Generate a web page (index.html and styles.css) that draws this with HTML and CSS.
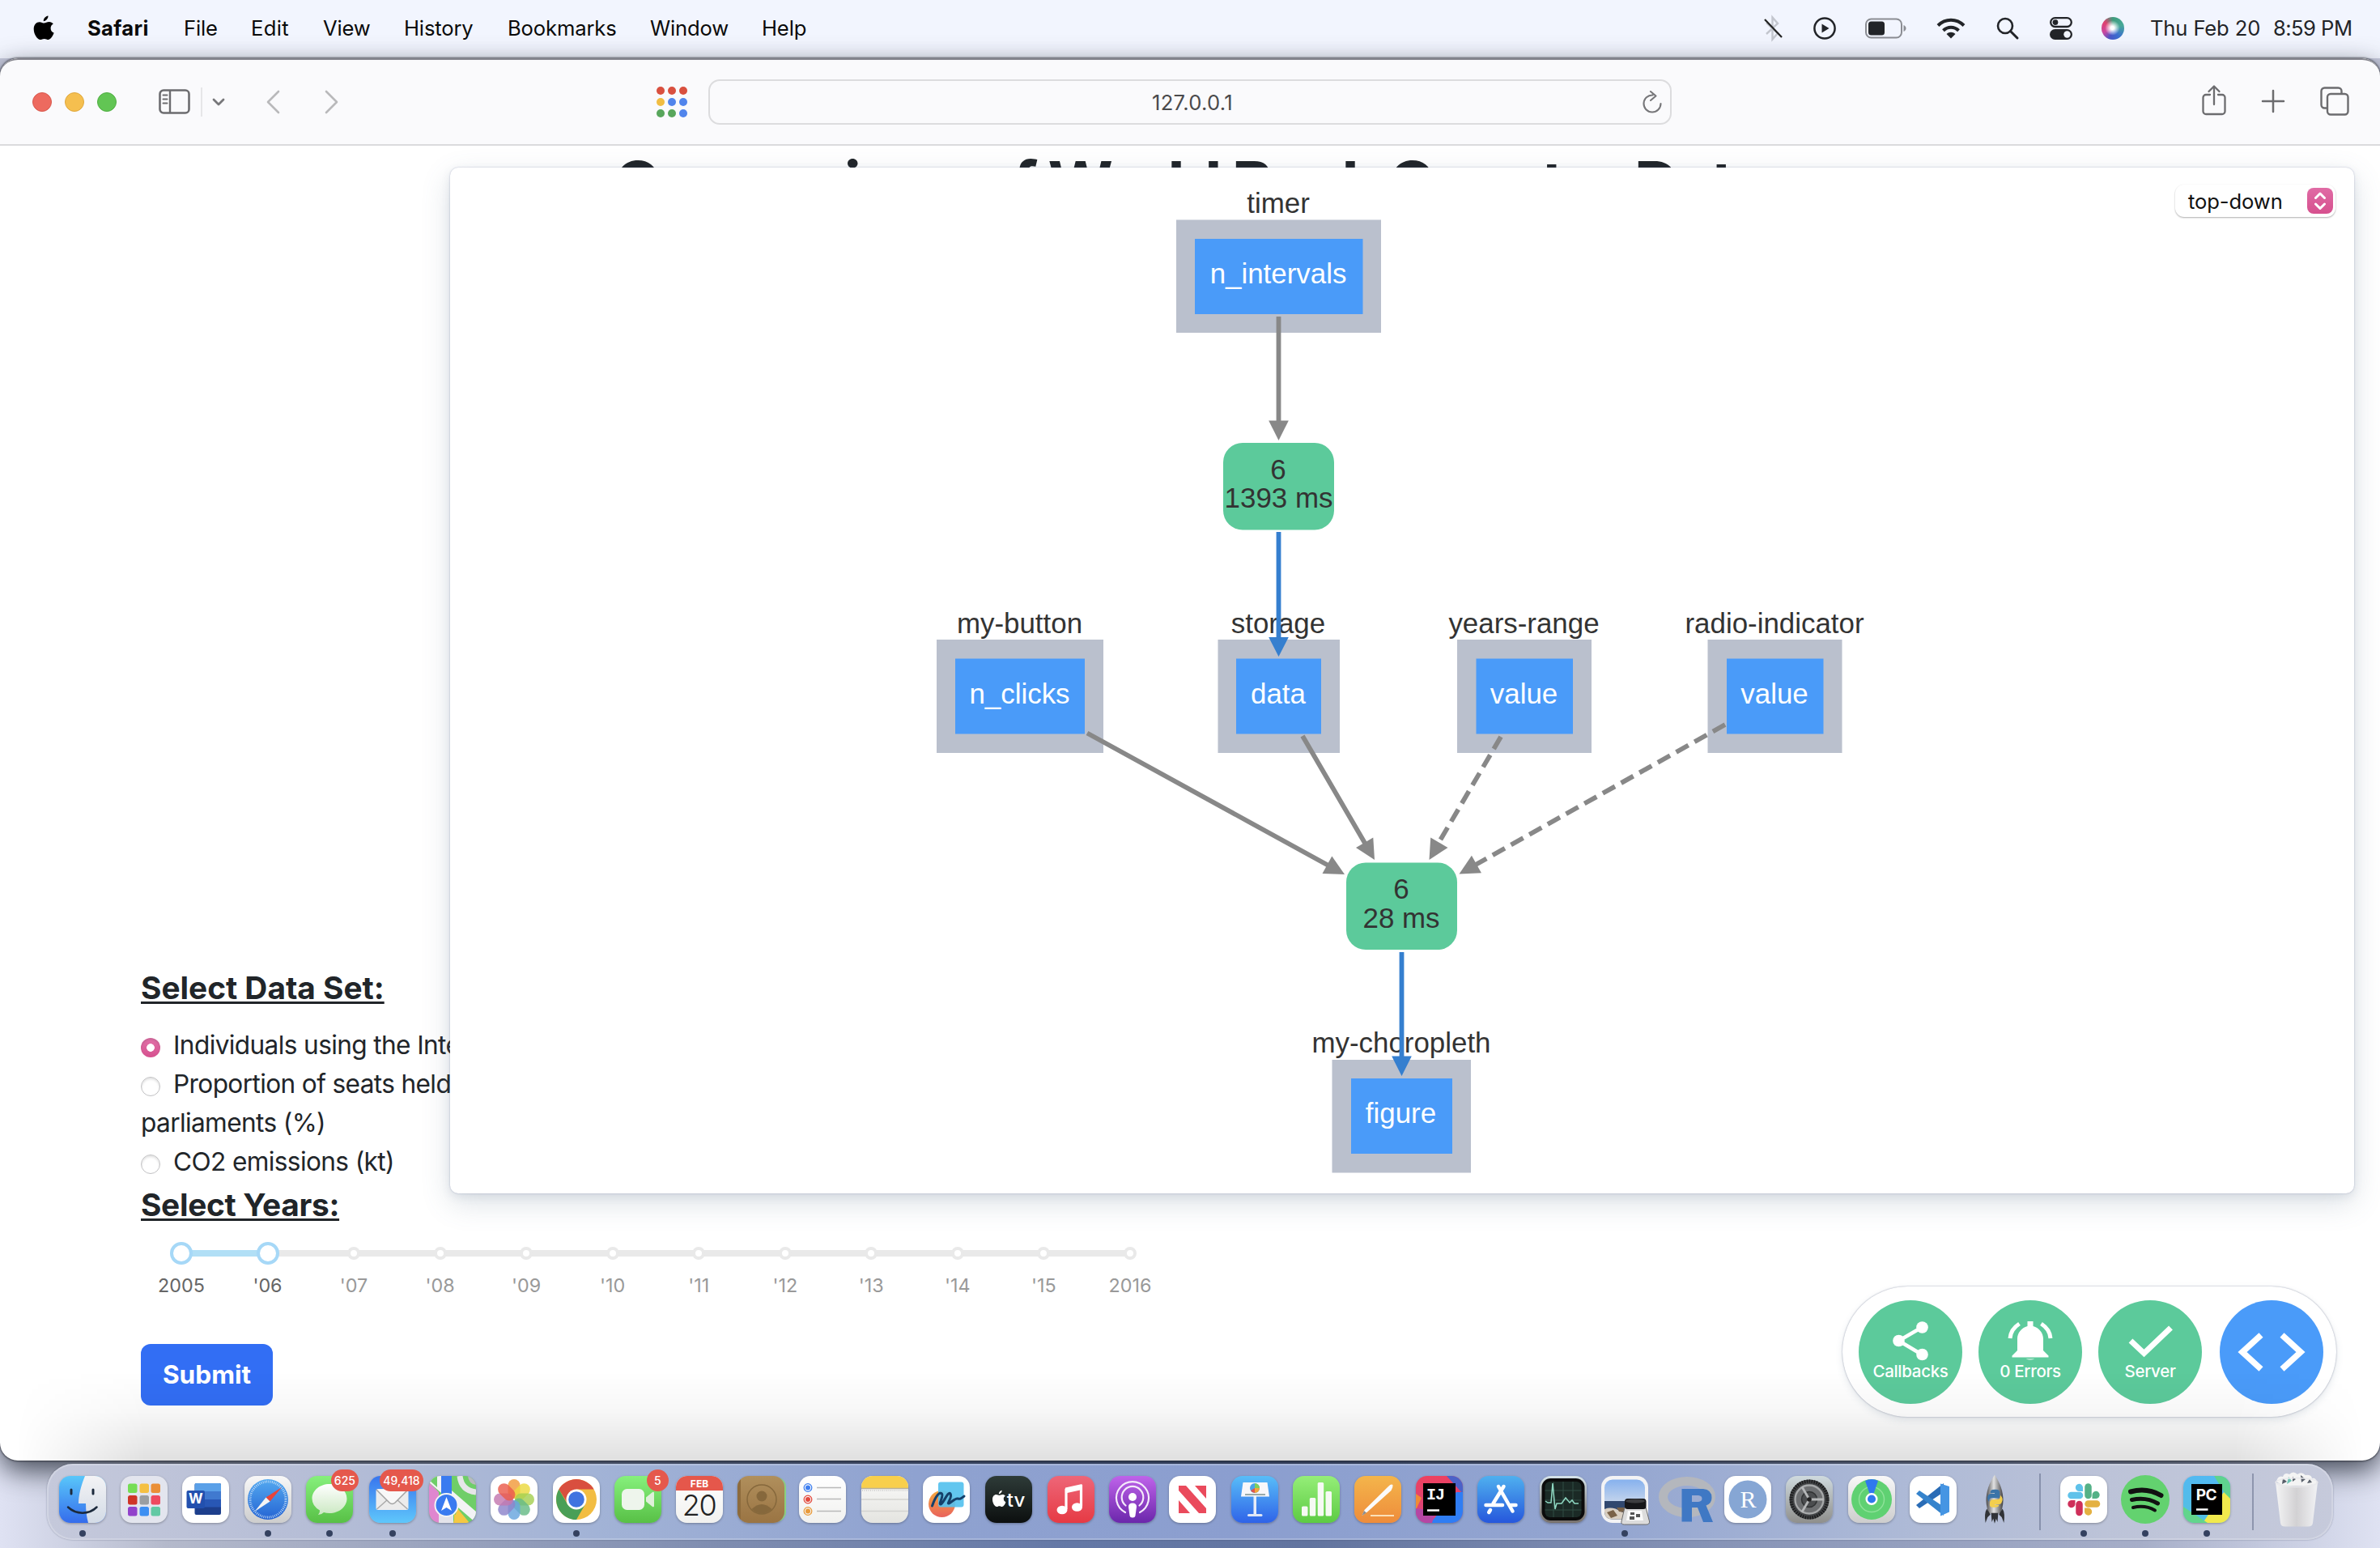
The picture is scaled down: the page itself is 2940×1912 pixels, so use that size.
FILE: index.html
```html
<!DOCTYPE html>
<html lang="en">
<head>
<meta charset="utf-8">
<title>127.0.0.1</title>
<link rel="stylesheet" href="styles.css">
</head>
<body>
<header class="menubar">
  <svg class="apple" viewBox="0 0 26 31"><path d="M18.500 .5C18.700 4 15.800 7 12.800 7.200C12.400 4 15.500 .9 18.500 .5ZM24.800 10.600C22.600 12 21.600 13.700 21.600 15.900C21.600 18.700 23.200 20.700 25.600 21.600C24.500 25.300 21.600 30 18.600 30C17 30 15.900 28.900 13.700 28.900C11.500 28.900 10.400 30 8.800 30C5 30 .7 23.500 .7 16.800C.7 11.500 4 8.200 7.800 8.200C10.200 8.200 11.900 9.600 13.500 9.600C15 9.600 17 8.100 19.700 8.100C21.700 8.100 23.700 9 24.800 10.600Z"/></svg>
  <nav class="menus">
    <span class="menu-app">Safari</span>
    <span class="menu-file">File</span>
    <span class="menu-edit">Edit</span>
    <span class="menu-view">View</span>
    <span class="menu-history">History</span>
    <span class="menu-bookmarks">Bookmarks</span>
    <span class="menu-window">Window</span>
    <span class="menu-help">Help</span>
  </nav>
  <div class="status">
    <svg class="st-bt" viewBox="0 0 24 30"><path d="M3 22 17 9 10.500 1.500V28.500L17 21 3 8" fill="none" stroke="#c3c6ce" stroke-width="2.400"/><path d="M1 4 22 26" stroke="#222" stroke-width="2.200"/></svg>
    <svg class="st-play" viewBox="0 0 28 28"><circle cx="14" cy="14" r="12.600" fill="none" stroke="#222428" stroke-width="2.500"/><path d="M10.500 8.500v11l9-5.500z" fill="#222428"/></svg>
    <svg class="st-batt" viewBox="0 0 52 26"><rect x="1" y="1.500" width="44" height="23" rx="6.500" fill="none" stroke="#8b8d93" stroke-width="2"/><rect x="4" y="4.500" width="20" height="17" rx="3.500" fill="#222428"/><path d="M47.500 9v8c4-1.500 4-6.500 0-8z" fill="#8b8d93"/></svg>
    <svg class="st-wifi" viewBox="0 0 36 26"><g fill="none" stroke="#222428" stroke-width="4"><path d="M2 9.500C11 .5 25 .5 34 9.500"/><path d="M8.500 15.800C14 10.500 22 10.500 27.500 15.800"/></g><path d="M12.500 20C16 17 20 17 23.500 20L18 25.500z" fill="#222428"/></svg>
    <svg class="st-search" viewBox="0 0 28 28"><circle cx="11" cy="11" r="9" fill="none" stroke="#222428" stroke-width="2.600"/><path d="M17.500 17.500 26 26" stroke="#222428" stroke-width="3" stroke-linecap="round"/></svg>
    <svg class="st-cc" viewBox="0 0 28 28"><rect x="1.200" y="1.200" width="25.600" height="10.800" rx="5.400" fill="none" stroke="#222428" stroke-width="2.300"/><circle cx="7" cy="6.600" r="3.400" fill="#222428"/><rect x="0" y="15" width="28" height="13" rx="6.500" fill="#222428"/><circle cx="21.500" cy="21.500" r="4.200" fill="#f2f5fe"/></svg>
    <span class="siri"></span>
    <span class="clock-date">Thu Feb 20</span><span class="clock-time">8:59 PM</span>
  </div>
</header>

<main class="window">
  <div class="toolbar">
    <div class="lights"><i class="close"></i><i class="min"></i><i class="max"></i></div>
    <svg class="tb-sidebar" viewBox="0 0 40 32"><rect x="1.500" y="1.500" width="36" height="28" rx="4.500" fill="none" stroke="#6c6c6f" stroke-width="2.600"/><path d="M14 2v27" stroke="#6c6c6f" stroke-width="2.400"/><path d="M5.500 7.500h5M5.500 12.500h5M5.500 17.500h5" stroke="#6c6c6f" stroke-width="2" stroke-linecap="round"/></svg>
    <i class="tb-rule"></i>
    <svg class="tb-chev" viewBox="0 0 16 10"><path d="M2 2l6 6 6-6" fill="none" stroke="#77777a" stroke-width="2.800" stroke-linecap="round" stroke-linejoin="round"/></svg>
    <svg class="tb-back" viewBox="0 0 18 30"><path d="M16 2 3 15l13 13" fill="none" stroke="#b9b9bb" stroke-width="2.600" stroke-linecap="round" stroke-linejoin="round"/></svg>
    <svg class="tb-fwd" viewBox="0 0 18 30"><path d="M3 2l13 13L3 28" fill="none" stroke="#b9b9bb" stroke-width="2.600" stroke-linecap="round" stroke-linejoin="round"/></svg>
    <div class="dots"><i class="r"></i><i class="r"></i><i class="r"></i><i class="y"></i><i class="b"></i><i class="b"></i><i class="g"></i><i class="g"></i><i class="b"></i></div>
    <div class="url"><span class="url-text">127.0.0.1</span>
      <svg class="reload" viewBox="0 0 26 28"><path d="M13.500 5.500A10.500 10.500 0 1 0 23.500 16M11 1l6.500 5.500L11 12" fill="none" stroke="#77777a" stroke-width="2.100" stroke-linecap="round" stroke-linejoin="round"/></svg></div>
    <svg class="tb-share" viewBox="0 0 30 38"><path d="M10 12H5a3.500 3.500 0 0 0-3.500 3.500v17A3.500 3.500 0 0 0 5 36h20a3.500 3.500 0 0 0 3.500-3.500v-17A3.500 3.500 0 0 0 25 12h-5M15 24V2M8.500 8 15 1.500 21.500 8" fill="none" stroke="#6c6c6f" stroke-width="2.300" stroke-linecap="round" stroke-linejoin="round"/></svg>
    <svg class="tb-plus" viewBox="0 0 28 28"><path d="M14 1v26M1 14h26" stroke="#6c6c6f" stroke-width="2.500" stroke-linecap="round"/></svg>
    <svg class="tb-tabs" viewBox="0 0 36 36"><path d="M8 26.500H5.500a4 4 0 0 1-4-4v-17a4 4 0 0 1 4-4h17a4 4 0 0 1 4 4V8" fill="none" stroke="#6c6c6f" stroke-width="2.400"/><rect x="9" y="9" width="25.500" height="25.500" rx="4" fill="none" stroke="#6c6c6f" stroke-width="2.400"/></svg>
  </div>

  <div class="page">
    <h1>Comparison of World Bank Country Data</h1>
    <div class="choropleth"></div>
    <section class="controls">
      <h2>Select Data Set:</h2>
      <div class="options">
        <label><i class="radio on"></i>Individuals using the Internet (% of population)</label>
        <label><i class="radio"></i>Proportion of seats held by women in national<br>parliaments (%)</label>
        <label><i class="radio"></i>CO2 emissions (kt)</label>
      </div>
      <h2 class="years">Select Years:</h2>
      <div class="slider">
        <div class="rail"><div class="range"></div></div>
        <div class="stops">
          <div class="stop on"><i></i><span>2005</span></div>
          <div class="stop on"><i></i><span>'06</span></div>
          <div class="stop"><i></i><span>'07</span></div>
          <div class="stop"><i></i><span>'08</span></div>
          <div class="stop"><i></i><span>'09</span></div>
          <div class="stop"><i></i><span>'10</span></div>
          <div class="stop"><i></i><span>'11</span></div>
          <div class="stop"><i></i><span>'12</span></div>
          <div class="stop"><i></i><span>'13</span></div>
          <div class="stop"><i></i><span>'14</span></div>
          <div class="stop"><i></i><span>'15</span></div>
          <div class="stop"><i></i><span>2016</span></div>
        </div>
      </div>
      <button class="submit">Submit</button>
    </section>

    <div class="graph-panel">
      <svg class="graph" viewBox="556 207 2352 1267">
        <g fill="#bac0cd">
          <rect x="1453" y="271.500" width="253" height="139.500"/><rect x="1157" y="790" width="206" height="140"/><rect x="1504.500" y="790" width="150.500" height="140"/><rect x="1800" y="790" width="166" height="140"/><rect x="2109.500" y="790" width="166" height="140"/><rect x="1645.500" y="1309" width="171.500" height="139.500"/>
        </g>
        <g fill="#4a9bf9">
          <rect x="1476" y="295" width="207.500" height="93"/><rect x="1180" y="813.500" width="160" height="93"/><rect x="1527" y="813.500" width="105" height="93"/><rect x="1823.500" y="813.500" width="119.500" height="93"/><rect x="2133" y="813.500" width="119.500" height="93"/><rect x="1669" y="1332" width="125" height="93"/>
        </g>
        <g fill="#5cca9b"><rect x="1511" y="547" width="137" height="107.500" rx="24"/><rect x="1663" y="1065.500" width="137" height="107.500" rx="24"/></g>
        <g class="g-label">
          <text x="1579" y="262.500">timer</text><text x="1259.500" y="781.500">my-button</text><text x="1579" y="781.500">storage</text><text x="1882.500" y="781.500">years-range</text><text x="2192" y="781.500">radio-indicator</text><text x="1731" y="1300">my-choropleth</text>
          <text x="1579" y="591.500">6</text><text x="1579.500" y="627">1393 ms</text><text x="1731" y="1110">6</text><text x="1731" y="1145.500">28 ms</text>
        </g>
        <g class="g-label g-prop">
          <text x="1579" y="350">n_intervals</text><text x="1259.500" y="868.500">n_clicks</text><text x="1579" y="868.500">data</text><text x="1882.500" y="868.500">value</text><text x="2192" y="868.500">value</text><text x="1730.500" y="1387">figure</text>
        </g>
        <g stroke="#888" stroke-width="5.800" fill="none">
          <path d="M1579.500 391V522M1343 905.500 1641 1069M1609 909 1687 1043"/>
          <path d="M1854 910 1776 1043M2131 895 1822 1068.500" stroke-dasharray="17.300 8.700"/>
        </g>
        <g fill="#888">
          <path d="M1579.500 544l-12.300-24.600h24.600z"/>
          <path d="M0 0l-12.300-24.600h24.600z" transform="translate(1661 1080) rotate(-61.300)"/>
          <path d="M0 0l-12.300-24.600h24.600z" transform="translate(1698 1062) rotate(-30.200)"/>
          <path d="M0 0l-12.300-24.600h24.600z" transform="translate(1765.500 1062) rotate(30.200)"/>
          <path d="M0 0l-12.300-24.600h24.600z" transform="translate(1802.500 1079.500) rotate(60.700)"/>
        </g>
        <g fill="#357fcf"><path d="M1576.600 657h5.800V787h9.400l-12.300 24-12.300-24h9.400zM1728.600 1176h5.800v128.500h9.400L1731.500 1329l-12.300-24.500h9.400z"/></g>
      </svg>
      <div class="select"><span>top-down</span><svg viewBox="0 0 32 32"><path d="M10.500 12.500 16 7l5.500 5.500M10.500 20l5.500 5.500 5.500-5.500" fill="none" stroke="#fff" stroke-width="3" stroke-linecap="round" stroke-linejoin="round"/></svg></div>
    </div>

    <div class="debug">
      <div class="dbg"><svg viewBox="0 0 58 48"><path d="M43 7.500 14.500 24 43 41" fill="none" stroke="#fff" stroke-width="4.500"/><circle cx="43.500" cy="7.500" r="7.300"/><circle cx="14.500" cy="24" r="7.300"/><circle cx="43.500" cy="41" r="7.300"/></svg><span>Callbacks</span></div>
      <div class="dbg"><svg viewBox="0 0 58 48"><path d="M25.500 0h7v6C40 8 45 14.500 45 21.500V36l6.500 6.500v2h-45v-2L13 36V21.500C13 14.500 18 8 25.500 6z"/><path d="M23.500 46.500h11q-5.500 2-11 0z"/><path d="M15.500 3C8.500 7.500 4.500 13.500 4 21M42.500 3C49.500 7.500 53.500 13.500 54 21" fill="none" stroke="#fff" stroke-width="5"/></svg><span>0 Errors</span></div>
      <div class="dbg"><svg viewBox="0 0 58 48"><path d="M5 24 21.500 39.500 54.500 8" fill="none" stroke="#fff" stroke-width="7"/></svg><span>Server</span></div>
      <div class="dbg dbg-code"><svg viewBox="0 0 84 48"><path d="M29 3 6 24l23 21M55 3l23 21-23 21" fill="none" stroke="#fff" stroke-width="7.500"/></svg></div>
    </div>
  </div>
</main>

<footer class="dock">
  <div class="app run"><svg viewBox="0 0 58 58" class="tile t-finder"><path d="M32 0C27 12 24 24 24 34H33C33 43 34 51 36 58H58V0Z" fill="url(#gFace)"/><path d="M15 17v5M42 17v5" stroke="#1c2a3c" stroke-width="3" stroke-linecap="round"/><path d="M11 38.500C21 48 37 48 46.500 38.500" fill="none" stroke="#1c2a3c" stroke-width="2.500" stroke-linecap="round"/><defs><linearGradient id="gFace" x2="0" y2="1"><stop stop-color="#f3f3f5"/><stop offset="1" stop-color="#d3dbe6"/></linearGradient></defs></svg></div>
  <div class="app"><svg viewBox="0 0 58 58" class="tile t-launch"><rect x="9" y="9.500" width="11.500" height="11.500" rx="2.500" fill="#75dd55"/><rect x="23.500" y="9.500" width="11.500" height="11.500" rx="2.500" fill="#f5c043"/><rect x="37.500" y="9.500" width="11.500" height="11.500" rx="2.500" fill="#ea8f37"/><rect x="9" y="24" width="11.500" height="11.500" rx="2.500" fill="#cf3427"/><rect x="23.500" y="24" width="11.500" height="11.500" rx="2.500" fill="#9a9ea1"/><rect x="37.500" y="24" width="11.500" height="11.500" rx="2.500" fill="#ee4a5f"/><rect x="9" y="38" width="11.500" height="11.500" rx="2.500" fill="#9242cb"/><rect x="23.500" y="38" width="11.500" height="11.500" rx="2.500" fill="#3d8ff2"/><rect x="37.500" y="38" width="11.500" height="11.500" rx="2.500" fill="#62c9a4"/></svg></div>
  <div class="app"><svg viewBox="0 0 58 58" class="tile t-white"><rect x="15.500" y="9" width="32.500" height="39" rx="2" fill="#1d3f8c"/><path d="M15.500 29h32.500v9.500H15.500z" fill="#2857b5"/><path d="M15.500 19h32.500v10H15.500z" fill="#4079cf"/><path d="M15.500 19v-8q0-2 2-2h28.500q2 0 2 2v8z" fill="#5aa0e8"/><rect x="5.500" y="18" width="22.500" height="22" rx="2" fill="#2250ae"/><text x="16.700" y="34" class="t-w">W</text></svg></div>
  <div class="app run"><svg viewBox="0 0 58 58" class="tile t-safari"><circle cx="29" cy="29" r="25" fill="url(#gSaf)"/><circle cx="29" cy="29" r="22" fill="none" stroke="#cfe4f8" stroke-width="3" stroke-dasharray=".8 1.500"/><path d="M46 14 26.500 26.500 31.500 31.500z" fill="#e8443a"/><path d="M12.500 44 26.500 26.500 31.500 31.500z" fill="#f4f4f4"/><defs><linearGradient id="gSaf" x2="0" y2="1"><stop stop-color="#53a9f0"/><stop offset="1" stop-color="#2564d3"/></linearGradient></defs></svg></div>
  <div class="app run"><svg viewBox="0 0 58 58" class="tile t-green"><path d="M29 10C41 10 50.500 18 50.500 28S41 46 29 46q-4 0-7-1-3 3-7 3 2.500-3 2-5.500Q7.500 37 7.500 28C7.500 18 17 10 29 10z" fill="url(#gMsg)"/><defs><linearGradient id="gMsg" x2="0" y2="1"><stop stop-color="#fff"/><stop offset="1" stop-color="#cbe8c2"/></linearGradient></defs></svg><b class="badge">625</b></div>
  <div class="app run shift"><svg viewBox="0 0 58 58" class="tile t-mail"><rect x="8.500" y="16" width="40" height="26" rx="2.500" fill="#ececec"/><path d="M9.500 41 23 29M47.500 41 34 29" stroke="#aaa" stroke-width="1.500"/><path d="M9 17 25 33q3.500 3 7 0L48 17" fill="#f8f8f8" stroke="#a2a2a2" stroke-width="1.500"/></svg><b class="badge badge-mail">49,418</b></div>
  <div class="app"><svg viewBox="0 0 58 58" class="tile t-maps"><path d="M0 8V58H12V20z" fill="#df86cf"/><path d="M35 40 50 58H30z" fill="#f5c843"/><path d="M0 8 58 58V44L28 18V0H0z" fill="#f3f3f5"/><path d="M0 0h10v14L0 5z" fill="#6fce68"/><path d="M12 38h18v20H12z" fill="#e3e3ea"/><path d="M31 47 50 58H31z" fill="#f5c843"/><path d="M15 0h13v30H15z" fill="#3a7bf0"/><path d="M38 0q2 18 20 20" fill="none" stroke="#e6e6e8" stroke-width="7"/><path d="M48 0q1 10 10 11V0z" fill="#b9babd"/><circle cx="21.500" cy="36" r="14" fill="#3a7bf0" stroke="#f4f4f4" stroke-width="2"/><path d="M21.500 26 28 43l-6.500-4-6.500 4z" fill="#fff"/></svg></div>
  <div class="app"><svg viewBox="0 0 58 58" class="tile t-white"><g fill-opacity=".82" transform="translate(29 29)"><rect x="-7.500" y="-25" width="15" height="24" rx="7.500" fill="#f29a3a"/><rect x="-7.500" y="-25" width="15" height="24" rx="7.500" fill="#ecd940" transform="rotate(45)"/><rect x="-7.500" y="-25" width="15" height="24" rx="7.500" fill="#a5cf52" transform="rotate(90)"/><rect x="-7.500" y="-25" width="15" height="24" rx="7.500" fill="#66bb86" transform="rotate(135)"/><rect x="-7.500" y="-25" width="15" height="24" rx="7.500" fill="#68a5de" transform="rotate(180)"/><rect x="-7.500" y="-25" width="15" height="24" rx="7.500" fill="#8c84cb" transform="rotate(225)"/><rect x="-7.500" y="-25" width="15" height="24" rx="7.500" fill="#c377b0" transform="rotate(270)"/><rect x="-7.500" y="-25" width="15" height="24" rx="7.500" fill="#ea5b4c" transform="rotate(315)"/></g></svg></div>
  <div class="app run"><svg viewBox="0 0 58 58" class="tile t-white"><circle cx="29" cy="29" r="25" fill="#f2bd42"/><path d="M7.400 16.500A25 25 0 0 1 50.600 16.500H29L19 35z" fill="#d94f3f"/><path d="M7.400 16.500A25 25 0 0 0 29 54L39.800 35.200 29 41 18.200 35.200z" fill="#4a9f57"/><circle cx="29" cy="29" r="12.500" fill="#fff"/><circle cx="29" cy="29" r="9.800" fill="#4073e0"/></svg></div>
  <div class="app"><svg viewBox="0 0 58 58" class="tile t-green"><rect x="9" y="16" width="28" height="26" rx="6.500" fill="#eef5ec"/><path d="M39 26.500 47 20q2-1 2 1v16q0 2-2 1l-8-6.500z" fill="#dff0da"/></svg><b class="badge badge-one">5</b></div>
  <div class="app"><svg viewBox="0 0 58 58" class="tile t-cal"><path d="M0 0h58v18H0z" fill="#e5574b"/><text x="29" y="14" class="t-feb">FEB</text><text x="28.500" y="49" class="t-20">20</text></svg></div>
  <div class="app"><svg viewBox="0 0 58 58" class="tile t-contacts"><path d="M0 0h4v58H0z" fill="#8d6b3c"/><circle cx="30" cy="29" r="18" fill="none" stroke="#86683c" stroke-width="1.500"/><circle cx="30" cy="25" r="6.500" fill="#86683c"/><path d="M17.500 41q12.500-12 25 0-12.500 11-25 0z" fill="#86683c"/></svg></div>
  <div class="app"><svg viewBox="0 0 58 58" class="tile t-cal"><g stroke-width="1.300" fill="none"><circle cx="11" cy="14.500" r="4.800" stroke="#3e7ff0"/><circle cx="11" cy="29" r="4.800" stroke="#e34a3e"/><circle cx="11" cy="43.500" r="4.800" stroke="#e99a3a"/><path d="M22 14.500h30M22 28.500h30M22 43.500h30" stroke="#b9b9b9" stroke-width="1.500"/></g><circle cx="11" cy="14.500" r="3" fill="#3e7ff0"/><circle cx="11" cy="29" r="3" fill="#e34a3e"/><circle cx="11" cy="43.500" r="3" fill="#e99a3a"/></svg></div>
  <div class="app"><svg viewBox="0 0 58 58" class="tile t-notes"><path d="M0 0h58v15H0z" fill="#f8cf4c"/><path d="M0 15.500h58" stroke="#b9b19a" stroke-width="1.500"/><path d="M1 18h57" stroke="#b0b0b0" stroke-dasharray="1 1.500"/><path d="M0 29h58M0 43.500h58" stroke="#d3d3d0" stroke-width="1.300"/></svg></div>
  <div class="app"><svg viewBox="0 0 58 58" class="tile t-white"><circle cx="23.500" cy="34.500" r="16.500" fill="url(#gFf)"/><rect x="19" y="7.500" width="31.500" height="31" rx="3" fill="#55c1ee" fill-opacity=".92"/><path d="M11.500 37C16 24 21 19 23.500 22S19 35 22 35 31 18 34 22 29 35 32 34 40 27 43 28 47 28 51 25" fill="none" stroke="#15406a" stroke-width="3" stroke-linecap="round"/><defs><linearGradient id="gFf" x2="0" y2="1"><stop stop-color="#f5a93e"/><stop offset="1" stop-color="#e9635c"/></linearGradient></defs></svg></div>
  <div class="app shift"><svg viewBox="0 0 58 58" class="tile t-tv"><g transform="translate(8.500 17.500) scale(.66 .68)" fill="#fff"><path d="M18.500 .5C18.700 4 15.800 7 12.800 7.200C12.400 4 15.500 .9 18.500 .5ZM24.800 10.600C22.600 12 21.600 13.700 21.600 15.900C21.600 18.700 23.200 20.700 25.600 21.600C24.500 25.300 21.600 30 18.600 30C17 30 15.900 28.900 13.700 28.900C11.500 28.900 10.400 30 8.800 30C5 30 .7 23.500 .7 16.800C.7 11.500 4 8.200 7.800 8.200C10.200 8.200 11.900 9.600 13.500 9.600C15 9.600 17 8.100 19.700 8.100C21.700 8.100 23.700 9 24.800 10.600Z"/></g><text x="38" y="38" class="t-tvtext">tv</text></svg></div>
  <div class="app shift"><svg viewBox="0 0 58 58" class="tile t-music"><path d="M23 41V17l18.500-4v24.500" fill="none" stroke="#fff" stroke-width="3.200"/><path d="M22 14.500 42.500 10v7L22 21.500z" fill="#fff"/><ellipse cx="18" cy="42" rx="6.500" ry="5.300" fill="#fff"/><ellipse cx="36.500" cy="38.500" rx="6.500" ry="5.300" fill="#fff"/></svg></div>
  <div class="app shift"><svg viewBox="0 0 58 58" class="tile t-pod"><g fill="none" stroke="#f4eafa" stroke-width="2.200" stroke-linecap="round"><path d="M20 45A20 20 0 1 1 38 45"/><path d="M20.500 36.500A13.300 13.300 0 1 1 37.500 36.500"/></g><circle cx="29" cy="26" r="5" fill="#fff"/><path d="M24 38q0-4.500 5-4.500t5 4.500l-1.500 11q-.5 2.500-3.500 2.500t-3.500-2.500z" fill="#fff"/></svg></div>
  <div class="app"><svg viewBox="0 0 58 58" class="tile t-white"><path d="M12 12h9L46 40v6h-9L12 18z" fill="#ea4a5c"/><path d="M32 12h14v16zM12 30v16h14z" fill="#ea4a5c"/></svg></div>
  <div class="app"><svg viewBox="0 0 58 58" class="tile t-key"><path d="M27.500 25h3.500v23h-3.500z" fill="#e7ecf7"/><rect x="20" y="47" width="18.500" height="3" rx="1.500" fill="#dfe6f5"/><path d="M14.500 8h30l2.500 17.500H12z" fill="#f7f7fa"/><path d="M17 22h25v2H17z" fill="#9aa"/><circle cx="29" cy="15" r="6" fill="#4aa3e8"/><path d="M29 15V9a6 6 0 0 1 6 6z" fill="#7fd05c"/><path d="M29 15h6a6 6 0 0 1-6 6z" fill="#f2a63c"/><path d="M29 15v6a6 6 0 0 1-5-3z" fill="#e2564d"/></svg></div>
  <div class="app"><svg viewBox="0 0 58 58" class="tile t-num"><g fill="#f6faf3"><rect x="11" y="37.500" width="7.500" height="12" rx="1.500"/><rect x="20.800" y="27" width="7.500" height="22.500" rx="1.500"/><rect x="30.700" y="8" width="7.500" height="41.500" rx="1.500"/><rect x="40.500" y="19" width="7.500" height="30.500" rx="1.500"/></g></svg></div>
  <div class="app"><svg viewBox="0 0 58 58" class="tile t-pages"><path d="M47.500 11q.5 3-2 7L16 44.500l-6.500 4.500 3-7L42 13q3.500-3.500 5.500-2z" fill="#fbfbfb"/><path d="M9.500 49 12 43l3 2.500z" fill="#8d8d8d"/><path d="M20 49h29" stroke="#fbe0b8" stroke-width="2"/></svg></div>
  <div class="app"><svg viewBox="0 0 58 58" class="tile t-ij"><path d="M38 0h20v22z" fill="#4b62c8"/><path d="M58 20V58H18L50 20z" fill="#2f7df4"/><path d="M0 22 7 27 0 42z" fill="#f08a35"/><path d="M0 40 24 44 20 58H0z" fill="#b546a4"/><rect x="9" y="9" width="40" height="40" fill="#000"/><text x="13" y="29" class="t-ijt">IJ</text><path d="M14 42.500h15" stroke="#fff" stroke-width="2.600"/></svg></div>
  <div class="app"><svg viewBox="0 0 58 58" class="tile t-store"><g stroke="#fff" stroke-width="4.500" stroke-linecap="round"><path d="M32.500 13 19.500 34M26 13 43.500 43.500M10.500 36H31M41.500 36h6M16 42l-1.800 3"/></g></svg></div>
  <div class="app"><svg viewBox="0 0 58 58" class="tile t-act"><rect x="2.500" y="3" width="53" height="52" rx="11" fill="#0b0b0b"/><rect x="6.500" y="7" width="45" height="44" rx="6" fill="#1b2a26"/><path d="M6.500 18h45M6.500 30h45M6.500 42h45M17 7v44M29 7v44M41 7v44" stroke="#335048" stroke-width=".9"/><path d="M7 31l3 2 4 0 2-24 3 32 2-7 6 0 5-7 5 6 3-3 3 4 5 0" fill="none" stroke="#8fd8c2" stroke-width="1.500"/></svg></div>
  <div class="app run"><svg viewBox="0 0 62 62" class="tile-free"><rect width="58" height="58" rx="14" fill="#f3f3f5"/><rect x="4" y="4.500" width="50" height="49" rx="10" fill="url(#gPrev)"/><path d="M4 31h50v13q0 9.500-10 9.500H14Q4 53.500 4 44z" fill="#31486f"/><path d="M4 41q10-4 20 3 8 2 14 9.500H14Q4 53.500 4 44z" fill="#d9cfc2"/><path d="M7 45l8-3 5 7-8 3zM19 39l9 0 2 6-8-1z" fill="#7a6248"/><path d="M29 39h26l4.500 17q.5 4-4 4h-27q-4.500 0-3.500-4z" fill="#dcdcdc" stroke="#6c6c6c"/><path d="M33 43h17l2 12H31z" fill="#fafafa"/><path d="M36 45h5v3h-5zM43 47h5v4h-5zM35 50h6v4h-6z" fill="#555"/><rect x="29" y="28" width="26.500" height="13" rx="3.500" fill="#17171a"/><ellipse cx="42" cy="31" rx="12" ry="2.500" fill="#3d3d40"/><defs><linearGradient id="gPrev" x2="0" y2="1"><stop stop-color="#86b1ee"/><stop offset=".55" stop-color="#c2d3ec"/></linearGradient></defs></svg></div>
  <div class="app"><svg viewBox="0 0 72 58" class="rlang"><ellipse cx="36" cy="26" rx="29.500" ry="19.500" fill="none" stroke="#b4b7bd" stroke-width="11"/><path fill-rule="evenodd" d="M29.500 16H56q10.500 1 10.500 11 0 7-7 9.500l8.500 20.500H56L49 39h-7v17.500H29.500zM42 24v8h8q4.500-.5 4.500-4t-4.500-4z" fill="#3f78c4"/></svg></div>
  <div class="app"><svg viewBox="0 0 58 58" class="tile t-white"><circle cx="29" cy="29" r="23.500" fill="#86a6d4"/><text x="29.500" y="39" class="t-r">R</text></svg></div>
  <div class="app"><svg viewBox="0 0 58 58" class="tile t-set"><circle cx="29" cy="29" r="24.500" fill="#424446"/><circle cx="29" cy="29" r="22.500" fill="none" stroke="#1c1d1e" stroke-width="4" stroke-dasharray="1.600 1.400"/><circle cx="29" cy="29" r="17.500" fill="#6d6f71" stroke="#a6a8a9" stroke-width="2.300"/><circle cx="29" cy="29" r="9.500" fill="#4b4d4f" stroke="#303233" stroke-width="1.500"/><path d="M29 29h18M29 29 20 13.500M29 29l-9 15.500" stroke="#b5b7b8" stroke-width="2.800"/><circle cx="29" cy="29" r="2.800" fill="#222"/></svg></div>
  <div class="app"><svg viewBox="0 0 58 58" class="tile t-safari"><circle cx="29" cy="29" r="25" fill="#5fd172"/><circle cx="29" cy="29" r="15.500" fill="none" stroke="#8ee299" stroke-width="1.500"/><path d="M29 29 21 6q8-4 16 0z" fill="#2f78ee"/><circle cx="29" cy="28.500" r="6.300" fill="#2f78ee" stroke="#fff" stroke-width="2.500"/></svg></div>
  <div class="app"><svg viewBox="0 0 58 58" class="tile t-white"><path d="M8 36 12 40 42 20V9z" fill="#2a6cb6"/><path d="M8 22 12 18 42 38V49z" fill="#3583cc"/><path d="M38 9.500 49 13v31.500L38 49.500z" fill="#4595e3"/></svg></div>
  <div class="app"><svg viewBox="0 0 32 70" class="rocket"><path d="M16 0C24 12 28 24 28 36c0 8-2 14-4 19H8C6 50 4 44 4 36 4 24 8 12 16 0z" fill="url(#gRock)"/><path d="M5 48q-4 6-2 20l3-8 4-4zM27 48q4 6 2 20l-3-8-4-4zM11 54h10l-1 13-2-5-2 7-2-7-2 5z" fill="#303236"/><path d="M16 21q8-1 7 6v6H12q-4 0-4 5-3-3-2-7t5-4h5v-1h-6q-1-5 6-5z" fill="#3b74a8"/><path d="M16 46q-8 1-7-5 0-6 6-6h5q4 0 4-6 5 5 2 10-1 3-5 3h-5v1h6q0 3-6 3z" fill="#f4cf4e"/><defs><linearGradient id="gRock"><stop stop-color="#4c4c4e"/><stop offset=".45" stop-color="#e2e2e2"/><stop offset="1" stop-color="#3f3f41"/></linearGradient></defs></svg></div>
  <i class="dock-rule"></i>
  <div class="app run"><svg viewBox="0 0 58 58" class="tile t-white"><g stroke-width="8.500" stroke-linecap="round"><path d="M34.500 13.500V24" stroke="#54b187"/><path d="M13.500 24H24" stroke="#5fc2ea"/><path d="M23.500 35V45" stroke="#cf2f5a"/><path d="M34.500 34.500H45" stroke="#e4b142"/></g><path d="M28 19h-4.500a4.600 4.600 0 1 1 4.500-5z" fill="#5fc2ea"/><path d="M39.500 28v-4.500a4.600 4.600 0 1 1 5 4.500z" fill="#54b187"/><path d="M18.500 30v4.500a4.600 4.600 0 1 1-5-4.500z" fill="#cf2f5a"/><path d="M30 39.500h4.500a4.600 4.600 0 1 1-4.500 5z" fill="#e4b142"/></svg></div>
  <div class="app run"><svg viewBox="0 0 60 60" class="spotify"><circle cx="30" cy="30" r="30" fill="#63d26f"/><g fill="none" stroke="#111" stroke-linecap="round"><path d="M12 20.500Q32 15 49.500 25" stroke-width="6"/><path d="M13.500 30.500Q31 26.500 45.500 35" stroke-width="5"/><path d="M15 40Q30 36.500 42 43.500" stroke-width="4"/></g></svg></div>
  <div class="app run"><svg viewBox="0 0 58 58" class="tile t-pc"><path d="M38 0h20v32z" fill="#5fd38e"/><path d="M58 28V58H24L50 20z" fill="#f1ea4d"/><path d="M0 38 30 58H0z" fill="#62d58c"/><rect x="10" y="10" width="38" height="38" fill="#000"/><text x="28.500" y="29.500" class="t-pct">PC</text><path d="M16 41.500h14.500" stroke="#fff" stroke-width="2.600"/></svg></div>
  <i class="dock-rule"></i>
  <div class="app"><svg viewBox="0 0 54 68" class="trash"><path d="M2 12Q4 4 10 6q2-6 8-3 5-5 10 0 5-4 10 1 7-1 8 4 5-1 6 5L46 17 10 17z" fill="#f4f4f4"/><path d="M10 8l5 4-6 3zM32 4l6 5-5 4zM22 6l4 3-4 3zM43 9l3 4-6 1z" fill="#59606b"/><path d="M17 6l4 5-6 4z" fill="#6fc2b4"/><path d="M1 13q26 9 52 0l-6 50q-.5 4.500-6 4.500H13q-5.500 0-6-4.500z" fill="url(#gTr)"/><ellipse cx="27" cy="13" rx="26" ry="5.500" fill="none" stroke="#e9e9ec" stroke-width="1.300"/><defs><linearGradient id="gTr"><stop stop-color="#f6f6f6" stop-opacity=".95"/><stop offset=".5" stop-color="#d2d1d3"/><stop offset="1" stop-color="#f4f4f6" stop-opacity=".95"/></linearGradient></defs></svg></div>
</footer>
</body>
</html>
```
FILE: styles.css
```css
* { box-sizing: border-box; }

body {
  margin: 0;
  width: 2940px;
  height: 1912px;
  overflow: hidden;
  display: flex;
  flex-direction: column;
  font-family: Inter, "Liberation Sans", sans-serif;
  color: #212529;
  background:
    linear-gradient(#c7cadd 0 120px, transparent 120px),
    linear-gradient(90deg, #dfe2f3, #b4b9cb 7%, #96a0bc 20%, #7f8db0 30%, #6478a6 45%, #62749f 55%, #8693b6 72%, #a6aec8 90%, #dfe2f2);
}
svg { display: block; flex: none; overflow: visible; }
i { font-style: normal; }

/* Menu bar */
.menubar {
  height: 72px;
  flex: none;
  display: flex;
  align-items: center;
  padding: 0 34px 3px 41px;
  background: #f2f5fe;
  color: #111;
  font-size: 25.6px;
  letter-spacing: -.15px;
  white-space: nowrap;
}
.apple { width: 26px; height: 31px; margin-right: 41px; }
.menus { display: flex; flex: 1; color: #0a0a0a; }
.menu-app { width: 119px; font-weight: 700; letter-spacing: .35px; }
.menu-file { width: 83px; }
.menu-edit { width: 89px; letter-spacing: .3px; }
.menu-view { width: 100px; }
.menu-history { width: 128px; }
.menu-bookmarks { width: 176px; }
.menu-window { width: 138px; }
.status { display: flex; align-items: center; color: #222428; }
.st-bt { width: 24px; height: 30px; margin-right: 37px; }
.st-play { width: 28px; height: 28px; margin-right: 36px; }
.st-batt { width: 52px; height: 26px; margin-right: 36px; }
.st-wifi { width: 36px; height: 26px; margin-right: 38px; }
.st-search { width: 28px; height: 28px; margin-right: 38px; }
.st-cc { width: 28px; height: 28px; margin-right: 36px; }
.siri {
  width: 28px;
  height: 28px;
  border-radius: 50%;
  margin-right: 32px;
  background: radial-gradient(circle at 48% 48%, #fff 0 10%, transparent 45%), conic-gradient(#3f9c7c, #47a898 20%, #3b6fd0 40%, #4a56c8 55%, #c948a0 68%, #e0406f 85%, #3f9c7c);
}
.clock-date { width: 152px; }
.clock-time { width: 98px; letter-spacing: -.55px; }

/* Browser window */
.window {
  height: 1732px;
  flex: none;
  display: flex;
  flex-direction: column;
  border-radius: 22px;
  overflow: hidden;
  background: #fff;
  box-shadow: 0 0 2px 1px rgba(20, 22, 30, .6), 0 12px 34px rgba(18, 24, 36, .75);
}
.toolbar {
  height: 108px;
  flex: none;
  display: flex;
  align-items: center;
  padding-left: 40px;
  background: #fafafc;
  border-top: 2px solid #87878f;
  border-bottom: 2px solid #dbdbdd;
  border-radius: 22px 22px 0 0;
}
.lights { display: flex; gap: 16px; width: 104px; margin-right: 52px; }
.lights i { width: 24px; height: 24px; border-radius: 50%; }
.close { background: #ed6a5f; border: 1px solid #d8584e; }
.min { background: #f5bf4f; border: 1px solid #dfa73c; }
.max { background: #62c554; border: 1px solid #4fae42; }
.tb-sidebar { width: 40px; height: 32px; margin-right: 12px; }
.tb-rule { width: 2px; height: 36px; background: #e6e6e8; margin-right: 12px; }
.tb-chev { width: 16px; height: 10px; margin-right: 50px; }
.tb-back { width: 18px; height: 30px; margin-right: 54px; }
.tb-fwd { width: 18px; height: 30px; margin-right: 393px; }
.dots { display: grid; grid-template-columns: repeat(3, 10px); gap: 4px; margin-right: 26px; }
.dots i { width: 10px; height: 10px; border-radius: 50%; }
.r { background: #d9503f; }
.y { background: #f1bd42; }
.b { background: #5185ec; }
.g { background: #58a65c; }
.url {
  width: 1190px;
  height: 56px;
  flex: none;
  display: flex;
  align-items: center;
  justify-content: flex-end;
  border: 2px solid #dcdcde;
  border-radius: 14px;
  padding-right: 9px;
  font-size: 25.6px;
  color: #4a4a4c;
}
.url-text { margin-right: 505px; letter-spacing: .3px; }
.reload { width: 26px; height: 28px; }
.tb-share { width: 30px; height: 38px; margin: 0 44px 4px 655px; }
.tb-plus { width: 28px; height: 28px; margin: 0 44px 3px 0; }
.tb-tabs { width: 36px; height: 36px; margin-bottom: 3px; }

/* Dash page */
.page { position: relative; height: 1624px; overflow: hidden; }
.page::after {
  content: "";
  position: absolute;
  inset: auto 0 0 0;
  height: 110px;
  background: linear-gradient(transparent, rgba(0, 0, 0, .03) 45%, rgba(0, 0, 0, .12));
  -webkit-mask-image: linear-gradient(90deg, transparent 20px, #000 180px, #000 2760px, transparent 2920px);
  mask-image: linear-gradient(90deg, transparent 20px, #000 180px, #000 2760px, transparent 2920px);
}
h1 {
  margin: -1px 0 0;
  height: 96px;
  line-height: 96px;
  font-size: 77.5px;
  font-weight: 700;
  letter-spacing: -2.95px;
  text-align: center;
  white-space: nowrap;
}
.choropleth { height: 921px; }
.controls { padding-left: 174px; }
h2 {
  margin: 0;
  line-height: 48px;
  font-size: 38.8px;
  font-weight: 700;
  text-decoration: underline;
  text-decoration-thickness: 3px;
  text-underline-offset: 3px;
  text-decoration-skip-ink: none;
}
.years { letter-spacing: -.3px; }
.options { margin: 22.5px 0 5.5px; font-size: 31.6px; letter-spacing: -.62px; line-height: 48px; white-space: nowrap; }
.options label { display: block; }
.radio {
  display: inline-block;
  width: 24px;
  height: 24px;
  margin-right: 16px;
  border-radius: 50%;
  vertical-align: -4.5px;
  border: 1px solid #c2c2c4;
  background: #fff;
  box-shadow: inset 0 2px 3px rgba(0, 0, 0, .12);
}
.radio.on {
  border: 0;
  background: radial-gradient(circle, #fff 0 4.5px, transparent 5.2px), linear-gradient(#e272a9, #d6508e);
}
.slider { display: grid; height: 148px; grid-template-rows: 148px; grid-template-columns: 1278.5px; margin-left: -3.3px; }
.rail { grid-area: 1 / 1; margin: 32px 53.3px 0; height: 8px; background: #e9e9e9; }
.range { height: 8px; width: 106.5px; background: #b1dff6; }
.stops { grid-area: 1 / 1; display: grid; grid-template-columns: repeat(12, 1fr); }
.stop { display: flex; flex-direction: column; align-items: center; font-size: 23.3px; line-height: 32px; color: #999; }
.stop i { width: 16px; height: 16px; margin: 28px 0 15.5px; border: 4px solid #e9e9e9; border-radius: 50%; background: #fff; }
.stop.on { color: #666; }
.stop.on i { width: 28px; height: 28px; margin: 22px 0 9.5px; border-color: #a6d8f7; }
.submit {
  display: block;
  width: 163px;
  height: 76px;
  padding: 0;
  border: 0;
  border-radius: 12px;
  background: #326ef4;
  color: #fff;
  font: 700 31.6px/76px Inter, sans-serif;
}

/* Callback graph overlay */
.graph-panel {
  position: absolute;
  left: 556px;
  top: 27px;
  width: 2352px;
  height: 1267px;
  border-radius: 10px;
  background: #fff;
  box-shadow: 0 0 2px rgba(80, 90, 140, .4), 0 4px 12px rgba(80, 103, 132, .12), 0 12px 36px rgba(80, 103, 132, .2);
}
.graph { width: 2352px; height: 1267px; }
.g-label { font: 34.9px "Liberation Sans", Arial, sans-serif; fill: #333; text-anchor: middle; }
.g-prop { fill: #fff; }
.select {
  position: absolute;
  left: 2131px;
  top: 21px;
  width: 198px;
  height: 40px;
  display: flex;
  align-items: center;
  justify-content: space-between;
  padding: 0 3px 0 16px;
  border-radius: 11px;
  background: #fff;
  box-shadow: 0 1px 2px rgba(0, 0, 0, .32);
  color: #111;
  font-size: 25.6px;
  letter-spacing: -.1px;
}
.select svg { width: 32px; height: 32px; border-radius: 8px; background: linear-gradient(#e06ba5, #d6508e); }

/* Debug menu */
.debug {
  position: absolute;
  left: 2276px;
  top: 1409px;
  width: 610px;
  height: 161px;
  display: flex;
  gap: 20px;
  padding: 17px 0 0 20px;
  border-radius: 81px;
  background: #fff;
  box-shadow: 0 0 2px rgba(80, 90, 120, .6), 0 4px 10px rgba(80, 103, 132, .14);
}
.dbg {
  width: 128px;
  height: 128px;
  border-radius: 50%;
  background: #5cca9b;
  color: #fff;
  fill: #fff;
  display: flex;
  flex-direction: column;
  align-items: center;
  padding-top: 26px;
  font-size: 20.5px;
  font-weight: 500;
  line-height: 28px;
  letter-spacing: -.3px;
  white-space: nowrap;
}
.dbg svg { width: 58px; height: 48px; }
.dbg-code { background: #4a9bf9; margin-left: 2px; padding-top: 40px; }
.dbg-code svg { width: 84px; }

/* Dock */
.dock {
  position: relative;
  width: 2824px;
  height: 94px;
  flex: none;
  display: flex;
  margin: 4px 0 0 58px;
  padding-left: 6px;
  border-radius: 32px;
  background: linear-gradient(90deg, #c5c9db, #b5bdd6 12%, #a2b3d6 24%, #8fa2d0 38%, #8b9ecf 52%, #93a5d0 68%, #abb8d6 80%, #bcc3d8 90%, #c6cadb);
  box-shadow: inset 0 0 0 2px rgba(255, 255, 255, .22), 0 0 2px rgba(20, 30, 60, .4);
}
.app { position: relative; width: 76.2px; flex: none; display: flex; flex-direction: column; align-items: center; padding-top: 15px; }
.tile { width: 58px; height: 58px; border-radius: 14px; overflow: hidden; box-shadow: 0 1px 3px rgba(0, 0, 0, .3); }
.run::after { content: ""; position: absolute; top: 82px; width: 8px; height: 8px; border-radius: 50%; background: #34415f; }
.shift { left: 1.5px; }
.t-finder { background: linear-gradient(#59c7fa, #356cec); }
.t-launch { background: #e3e5ee; }
.t-white { background: #fff; }
.t-safari { background: linear-gradient(#f8f8f8, #cdcdcd); }
.t-green { background: linear-gradient(#86f07c, #58c046); }
.t-mail { background: linear-gradient(#3875ee, #5fc7fb); }
.t-maps { background: #6fce68; }
.t-cal { background: linear-gradient(#fff, #f1f1ef); }
.t-contacts { background: linear-gradient(#b08f5c, #9a7443); box-shadow: 3px 0 0 -1px #8ad07c, 0 1px 3px rgba(0, 0, 0, .3); }
.t-notes { background: linear-gradient(#fbfbfa, #e4e4e0); }
.t-tv { background: linear-gradient(#2e3b38, #0c0f0f); }
.t-music { background: linear-gradient(#ee6678, #e63a44); }
.t-pod { background: linear-gradient(#bf63ea, #6b27ab); }
.t-key { background: linear-gradient(#58bdf8, #2f63e8); }
.t-num { background: linear-gradient(#95ee78, #5dcb43); }
.t-pages { background: linear-gradient(#f4b54b, #ee8c3b); }
.t-ij { background: linear-gradient(#ee4160, #d6447e); }
.t-store { background: linear-gradient(#4fb0ef, #2657dc); }
.t-act { background: linear-gradient(#d5e3ea, #77716c); }
.t-set { background: linear-gradient(#cfdade, #8f8f8c); }
.t-pc { background: linear-gradient(#52b9f2, #52c0e0); }
.tile-free { width: 62px; height: 62px; margin-left: 4px; }
.rlang { width: 72px; height: 58px; margin-left: 2px; }
.rocket { width: 28px; height: 70px; margin-top: -6px; }
.spotify { width: 60px; height: 60px; margin-top: -1px; }
.trash { width: 54px; height: 68px; margin-top: -5px; }
.t-w { font: 700 17px Inter, sans-serif; fill: #fff; text-anchor: middle; }
.t-feb { font: 700 12px Inter, sans-serif; fill: #fff; text-anchor: middle; }
.t-20 { font: 300 36px Inter, sans-serif; fill: #222; text-anchor: middle; letter-spacing: -1.5px; }
.t-tvtext { font: 500 24px Inter, sans-serif; fill: #fff; text-anchor: middle; }
.t-ijt { font: 700 20px "Liberation Mono", monospace; fill: #fff; letter-spacing: -1px; }
.t-pct { font: 700 19px Inter, sans-serif; fill: #fff; text-anchor: middle; letter-spacing: -.5px; }
.t-r { font: 30px "Liberation Serif", serif; fill: #fff; text-anchor: middle; }
.badge {
  position: absolute;
  top: 7px;
  right: 2px;
  height: 27px;
  padding: 0 4px;
  border-radius: 14px;
  background: #e5584c;
  color: #fff;
  font-size: 14px;
  font-weight: 500;
  line-height: 28px;
}
.badge-mail { right: 0; }
.badge-one { right: 0; width: 27px; text-align: center; }
.dock-rule { width: 2px; height: 70px; margin: 12px 15px 0 17px; flex: none; background: rgba(90, 100, 130, .5); }
```
